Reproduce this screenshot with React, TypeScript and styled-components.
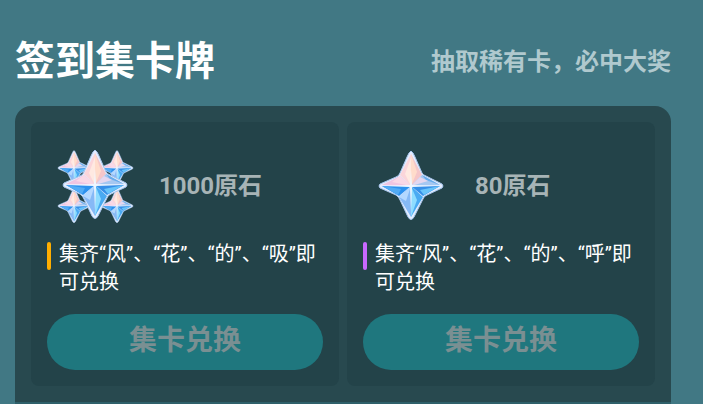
import React from "react";
import styled, { createGlobalStyle } from "styled-components";

const GlobalStyle = createGlobalStyle`
  * { box-sizing: border-box; }
  body {
    margin: 0;
    background: #fff;
    font-family: Roboto, "Noto Sans CJK SC", sans-serif;
    overflow: hidden;
  }
  h1, h2, p { margin: 0; }
`;

const Page = styled.main`
  min-height: 100vh;
  margin-right: 17px;
  padding: 32px 32px 0 15px;
  background: #417884;
`;

const Header = styled.header`
  display: flex;
  align-items: center;
  justify-content: space-between;
  height: 60px;
  margin-bottom: 14px;
`;

const Title = styled.h1`
  font-size: 40px;
  line-height: 56px;
  font-weight: 700;
  color: #fff;
`;

const Subtitle = styled.p`
  font-size: 24px;
  line-height: 32px;
  font-weight: 700;
  color: #b0c9ce;
`;

const Panel = styled.section`
  display: grid;
  grid-template-columns: 1fr 1fr;
  gap: 8px;
  padding: 16px;
  background: #28494f;
  border-radius: 16px 16px 0 0;
`;

const NextPanel = styled.div`
  height: 2px;
  background: #2f606a;
`;

const Card = styled.article`
  padding: 16px;
  background: #234349;
  border-radius: 8px;
`;

const Prize = styled.div`
  display: flex;
  align-items: center;
  gap: 16px;
  height: 96px;
  margin-bottom: 6px;
`;

const PrizeIcon = styled.svg`
  flex: none;
  width: 96px;
  height: 96px;
`;

const PrizeName = styled.h2`
  font-size: 24px;
  line-height: 32px;
  font-weight: 700;
  color: #a7b4b6;
`;

const Rule = styled.div`
  display: flex;
  align-items: flex-start;
  gap: 8px;
  margin-bottom: 18px;
`;

const Marker = styled.span<{ $color: string }>`
  flex: none;
  width: 4px;
  height: 28px;
  margin-top: 2px;
  border-radius: 2px;
  background: ${({ $color }) => $color};
`;

const RuleText = styled.p`
  font-size: 20px;
  line-height: 28px;
  min-height: 56px;
  color: #fff;
`;

const RedeemButton = styled.button`
  display: block;
  width: 100%;
  height: 56px;
  padding: 0 0 2px;
  border: 0;
  border-radius: 28px;
  background: #1f777e;
  color: #7a8f92;
  font: inherit;
  font-size: 28px;
  line-height: 40px;
  font-weight: 700;
`;

function Star({ x, y, scale = 1 }: { x: number; y: number; scale?: number }) {
  return (
    <g transform={`translate(${x} ${y}) scale(${scale})`}>
      <path
        d="M0-35Q2-34 4-29L11-13Q12-11 15-10L31-2Q33 0 31 2L16 9Q13 10 12 13L3 31Q0 36-3 31L-11 14Q-12 11-15 9L-31 2Q-33 0-31-2L-15-9Q-12-10-11-13L-4-29Q-2-34 0-35Z"
        fill="#e3edff"
        stroke="#a5c4ec"
        strokeWidth="1"
        strokeLinejoin="round"
      />
      <path d="M0-32L-11-11 0 0Z" fill="#fbd5da" />
      <path d="M0-32L11-11 0 0Z" fill="#f5c6c9" />
      <path d="M0-32L6-14 0 0Z" fill="#ffdccb" />
      <path d="M0-28L0 0-6-12Z" fill="#ffe9e1" />
      <path d="M-11-10L-29-1 0 0Z" fill="#efc5e2" />
      <path d="M-11-10L-19-4 0 0Z" fill="#f9d8e6" />
      <path d="M11-11L29-1 0 0Z" fill="#a5c7f1" />
      <path d="M11-11L29-1 15-6Z" fill="#67aceb" />
      <path d="M9-9L0 0 17-5Z" fill="#e5d7ef" />
      <path d="M-29 0L-12 10 0 0Z" fill="#2d91ee" />
      <path d="M-29 0L-13 9-10 3Z" fill="#52abf5" />
      <path d="M29 0L12 10 0 0Z" fill="#368fe8" />
      <path d="M29 0L13 9 9 4Z" fill="#68c4fa" />
      <path d="M-12 11L0 31V0Z" fill="#86b9f6" />
      <path d="M-12 11L-5 15 0 0Z" fill="#b4d8ff" />
      <path d="M12 11L0 31V0Z" fill="#4aaaf2" />
      <path d="M0 0L6 14 0 31Z" fill="#8edcff" />
      <path d="M0-16L1-1 28 0 1 1 0 25-1 1-28 0-1-1Z" fill="#f0f7ff" />
    </g>
  );
}

function Primogems({ many }: { many: boolean }) {
  return (
    <PrizeIcon viewBox="0 0 96 96" aria-hidden="true">
      {many && (
        <>
          <Star x={27} y={30} scale={0.5} />
          <Star x={70} y={30} scale={0.5} />
          <Star x={27} y={68} scale={0.5} />
          <Star x={70} y={68} scale={0.5} />
        </>
      )}
      <Star x={48} y={many ? 47 : 48} />
    </PrizeIcon>
  );
}

const prizes = [
  {
    name: "1000原石",
    rule: "集齐“风”、“花”、“的”、“吸”即可兑换",
    color: "#ffae00",
    many: true,
  },
  {
    name: "80原石",
    rule: "集齐“风”、“花”、“的”、“呼”即可兑换",
    color: "#c868ff",
    many: false,
  },
];

export default function App() {
  return (
    <>
      <GlobalStyle />
      <Page lang="zh-CN">
        <Header>
          <Title>签到集卡牌</Title>
          <Subtitle>抽取稀有卡，必中大奖</Subtitle>
        </Header>
        <Panel>
          {prizes.map((prize) => (
            <Card key={prize.name}>
              <Prize>
                <Primogems many={prize.many} />
                <PrizeName>{prize.name}</PrizeName>
              </Prize>
              <Rule>
                <Marker $color={prize.color} />
                <RuleText>{prize.rule}</RuleText>
              </Rule>
              <RedeemButton type="button">集卡兑换</RedeemButton>
            </Card>
          ))}
        </Panel>
        <NextPanel />
      </Page>
    </>
  );
}
